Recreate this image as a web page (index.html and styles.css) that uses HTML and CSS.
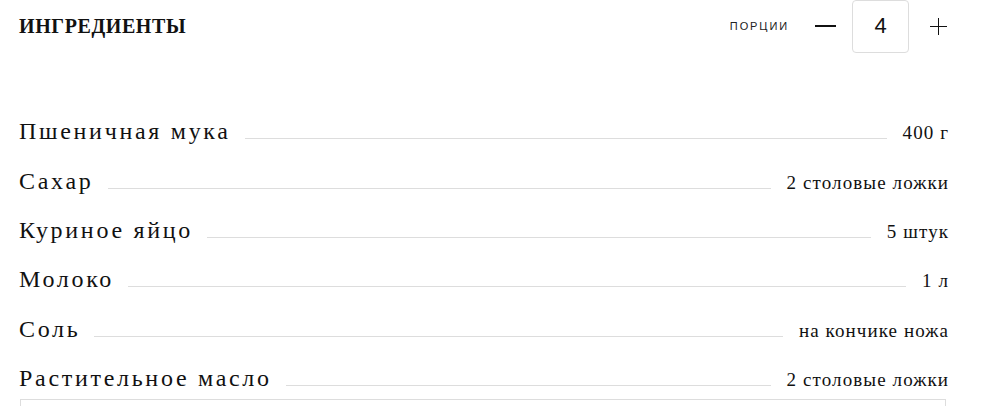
FILE: index.html
```html
<!DOCTYPE html>
<html lang="ru">
<head>
<meta charset="utf-8">
<link rel="stylesheet" href="styles.css">
</head>
<body>
<section class="ingredients">
  <header class="head">
    <h2 class="title">ИНГРЕДИЕНТЫ</h2>
    <div class="portions">
      <span class="portions-label">ПОРЦИИ</span>
      <button class="btn minus" aria-label="минус"><span class="bar-h"></span></button>
      <div class="count">4</div>
      <button class="btn plus" aria-label="плюс"><span class="bar-h"></span><span class="bar-v"></span></button>
    </div>
  </header>
  <ul class="list">
    <li class="row"><span class="name">Пшеничная мука</span><span class="leader"></span><span class="qty">400 г</span></li>
    <li class="row"><span class="name">Сахар</span><span class="leader"></span><span class="qty">2 столовые ложки</span></li>
    <li class="row"><span class="name">Куриное яйцо</span><span class="leader"></span><span class="qty">5 штук</span></li>
    <li class="row"><span class="name">Молоко</span><span class="leader"></span><span class="qty">1 л</span></li>
    <li class="row"><span class="name">Соль</span><span class="leader"></span><span class="qty">на кончике ножа</span></li>
    <li class="row"><span class="name">Растительное масло</span><span class="leader"></span><span class="qty">2 столовые ложки</span></li>
  </ul>
  <div class="panel"></div>
</section>
</body>
</html>
```
FILE: styles.css
```css
html, body {
  margin: 0;
  padding: 0;
  background: #fff;
  color: #111;
}
body {
  overflow: hidden;
  height: 406px;
}
.ingredients {
  width: 929px;
  padding-left: 19px;
}
.head {
  display: flex;
  justify-content: space-between;
  align-items: center;
  height: 54px;
  margin-top: -1px;
}
.title {
  margin: 0;
  font-family: "Liberation Serif", serif;
  font-weight: bold;
  font-size: 20px;
  letter-spacing: 0.6px;
  color: #111;
}
.portions {
  display: flex;
  align-items: center;
  height: 100%;
}
.portions-label {
  font-family: "Liberation Sans", sans-serif;
  font-size: 11px;
  letter-spacing: 1.9px;
  color: #222;
  margin-right: 26px;
}
.btn {
  border: 0;
  background: none;
  padding: 0;
  position: relative;
  width: 22px;
  height: 22px;
  cursor: pointer;
}
.btn .bar-h {
  position: absolute;
  left: 0;
  top: 10px;
  width: 21px;
  height: 2px;
  background: #111;
}
.plus {
  width: 17px;
  margin-left: 21px;
  margin-right: 1px;
}
.plus .bar-h {
  width: 17px;
  height: 1.5px;
  top: 10.5px;
}
.plus .bar-v {
  position: absolute;
  left: 7.75px;
  top: 2.5px;
  width: 1.5px;
  height: 17px;
  background: #111;
}
.count {
  margin-left: 15px;
  width: 57px;
  height: 53px;
  box-sizing: border-box;
  border: 1px solid #ddd;
  border-radius: 4px;
  display: flex;
  align-items: center;
  justify-content: center;
  font-family: "Liberation Sans", sans-serif;
  font-size: 22px;
  color: #111;
}
.list {
  list-style: none;
  margin: 52px 0 0;
  padding: 0;
}
.row {
  display: flex;
  align-items: baseline;
  height: 49.4px;
  box-sizing: border-box;
  padding-top: 13.3px;
  line-height: 26px;
}
.name {
  font-family: "Liberation Serif", serif;
  font-size: 24px;
  letter-spacing: 2.7px;
  color: #111;
}
.leader {
  flex: 1;
  height: 0;
  border-bottom: 1px solid #ddd;
  margin: 0 16px 0 14px;
}
.qty {
  font-family: "Liberation Serif", serif;
  font-size: 19px;
  line-height: 20px;
  letter-spacing: 1.1px;
  margin-right: -1.1px;
  color: #111;
}
.panel {
  margin-left: 1px;
  margin-top: -2px;
  width: 926px;
  height: 8px;
  box-sizing: border-box;
  border: 1px solid #ddd;
  border-bottom: 0;
}
```
